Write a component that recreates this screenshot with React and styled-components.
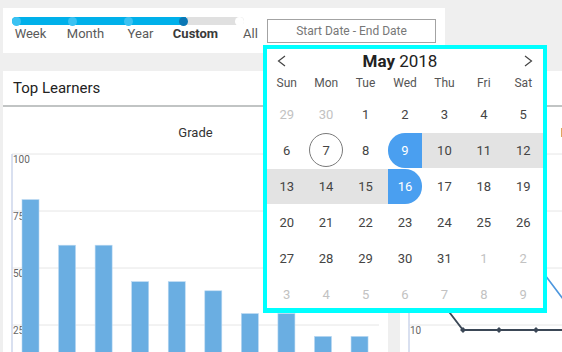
import styled, { createGlobalStyle, css } from "styled-components";

const GlobalStyle = createGlobalStyle`
  body {
    margin: 0;
    background: #efefef;
    overflow: hidden;
    font-family: Roboto, "Liberation Sans", sans-serif;
  }
`;

const Page = styled.div`
  width: 800px;
  padding: 8px 0 0 3px;
`;

const Toolbar = styled.div`
  display: flex;
  align-items: flex-start;
  width: 442px;
  height: 45px;
  box-sizing: border-box;
  padding-top: 9px;
  background: #fff;
`;

const SliderBlock = styled.div`
  width: 264px;
`;

const Track = styled.div`
  display: flex;
  align-items: center;
  justify-content: space-between;
  width: 232px;
  height: 8px;
  margin-left: 9px;
  border-radius: 4px;
  background: linear-gradient(to right, #00b0ea 174px, #e0e0e0 174px);
`;

const Dot = styled.span`
  width: 9px;
  height: 9px;
  border-radius: 50%;
  background: ${(p) =>
    p.kind === "active" ? "#0a76b4" : p.kind === "off" ? "#fff" : "#3bc2f2"};
`;

const Labels = styled.div`
  display: grid;
  grid-template-columns: repeat(5, 55px);
  margin-top: 2px;
`;

const Label = styled.span`
  text-align: center;
  font-size: 13px;
  line-height: 14px;
  color: #5a5a5a;

  ${(p) =>
    p.selected &&
    css`
      font-weight: 700;
      color: #3a3a3a;
    `}
`;

const DateField = styled.div`
  position: relative;
  margin-top: 2px;
`;

const DateInput = styled.div`
  width: 169px;
  height: 24px;
  box-sizing: border-box;
  border: 1px solid #a3a3a3;
  font-size: 12px;
  line-height: 22px;
  text-align: center;
  color: #777;
`;

const Popover = styled.div`
  position: absolute;
  top: 26px;
  left: -4px;
  z-index: 10;
  width: 284px;
  height: 268px;
  box-sizing: border-box;
  border: 4px solid #00ffff;
  border-bottom-width: 5px;
  background: #fff;
  overflow: hidden;
`;

const CalHeader = styled.div`
  display: flex;
  align-items: center;
  justify-content: space-between;
  height: 23px;
  padding: 0 10px;
`;

const CalTitle = styled.div`
  padding-right: 10px;
  font-size: 17px;
  color: #222;

  b {
    font-weight: 700;
  }
`;

const Week = styled.div`
  display: grid;
  grid-template-columns: repeat(7, 1fr);
  height: 22px;
  line-height: 22px;
  font-size: 12px;
  color: #555;
  text-align: center;
`;

const Days = styled.div`
  display: grid;
  grid-template-columns: repeat(7, 1fr);
  grid-auto-rows: 36px;
  margin-top: 3px;
`;

const bandBg = {
  in: "#e3e3e3",
  start: "linear-gradient(to right, transparent 50%, #e3e3e3 50%)",
  end: "linear-gradient(to right, #e3e3e3 50%, transparent 50%)",
};

const DayCell = styled.div`
  display: flex;
  justify-content: center;
  height: 35px;
  background: ${(p) => bandBg[p.range] || "transparent"};
`;

const DayMark = styled.span`
  display: flex;
  align-items: center;
  justify-content: center;
  width: 34px;
  height: 35px;
  box-sizing: border-box;
  font-size: 13px;
  color: ${(p) => (p.muted ? "#c2c2c2" : "#444")};

  ${(p) =>
    p.range === "start" &&
    css`
      background: #4a9ff0;
      color: #fff;
      border-radius: 17px 0 0 17px;
    `}
  ${(p) =>
    p.range === "end" &&
    css`
      background: #4a9ff0;
      color: #fff;
      border-radius: 0 17px 17px 0;
    `}
  ${(p) =>
    p.today &&
    css`
      height: 34px;
      border: 1px solid #7a7a7a;
      border-radius: 50%;
    `}
`;

const Dashboard = styled.div`
  display: grid;
  grid-template-columns: 385px 385px;
  gap: 12px;
  margin-top: 18px;
`;

const Panel = styled.div`
  height: 300px;
  background: #fff;
`;

const PanelHeader = styled.div`
  height: 34px;
  padding-left: 10px;
  border-bottom: 2px solid #c1c4c4;
  font-size: 15px;
  line-height: 34px;
  color: #222;
`;

const ChartTitle = styled.div`
  padding-top: 17px;
  font-size: 13px;
  line-height: 18px;
  text-align: center;
  color: #333;
`;

const ChartSvg = styled.svg`
  display: block;
`;

const weekdays = ["Sun", "Mon", "Tue", "Wed", "Thu", "Fri", "Sat"];

const days = [
  [29, true], [30, true], [1], [2], [3], [4], [5],
  [6], [7, false, null, true], [8], [9, false, "start"], [10, false, "in"], [11, false, "in"], [12, false, "in"],
  [13, false, "in"], [14, false, "in"], [15, false, "in"], [16, false, "end"], [17], [18], [19],
  [20], [21], [22], [23], [24], [25], [26],
  [27], [28], [29], [30], [31], [1, true], [2, true],
  [3, true], [4, true], [5, true], [6, true], [7, true], [8, true], [9, true],
];

const grades = [80, 60, 60, 44, 44, 40, 30, 30, 20, 20];
const yOf = (v) => 240 - v * 2.28;
const grid = [100, 75, 50, 25];

function Chevron({ dir }) {
  return (
    <svg width="9" height="12" viewBox="0 0 9 12">
      <path
        d={dir === "left" ? "M8 1 L1.5 6 L8 11" : "M1 1 L7.5 6 L1 11"}
        fill="none"
        stroke="#444"
        strokeWidth="1.2"
      />
    </svg>
  );
}

function Axis({ labels }) {
  return (
    <>
      {grid.map((g, i) => (
        <g key={g}>
          <line x1="9" x2="376" y1={yOf(g)} y2={yOf(g)} stroke="#e6e6e6" />
          <text x="10" y={yOf(g) + 8.5} fontSize="10" fill="#666" fontFamily="Roboto, sans-serif">
            {labels[i]}
          </text>
        </g>
      ))}
      <line x1="9" x2="9" y1="12" y2="240" stroke="#ccd6eb" strokeWidth="1.5" />
    </>
  );
}

function GradeChart() {
  return (
    <ChartSvg width="385" height="230">
      <Axis labels={["100", "75", "50", "25"]} />
      {grades.map((v, i) => (
        <rect
          key={i}
          x={19 + i * 36.56}
          y={yOf(v)}
          width="17"
          height={240 - yOf(v)}
          fill="#6aaee2"
          stroke="#b9d8f2"
          strokeWidth="0.6"
        />
      ))}
    </ChartSvg>
  );
}

const darkPts = [[27, 141], [63, 188], [99, 188], [136, 188], [172, 188]];
const bluePts = [[27, 60], [63, 40], [99, 80], [136, 121], [172, 169]];

function ScoreChart() {
  const pts = (a) => a.map((p) => p.join(",")).join(" ");
  return (
    <ChartSvg width="385" height="230">
      <Axis labels={["40", "30", "20", "10"]} />
      <polyline points={pts(bluePts)} fill="none" stroke="#4d97de" strokeWidth="1.6" />
      <polyline points={pts(darkPts)} fill="none" stroke="#3b4756" strokeWidth="1.8" />
      {darkPts.map(([x, y]) => (
        <path key={x} d={`M${x} ${y - 3} L${x + 3} ${y} L${x} ${y + 3} L${x - 3} ${y} Z`} fill="#3b4756" />
      ))}
    </ChartSvg>
  );
}

export default function App() {
  return (
    <Page>
      <GlobalStyle />
      <Toolbar>
        <SliderBlock>
          <Track>
            <Dot />
            <Dot />
            <Dot />
            <Dot kind="active" />
            <Dot kind="off" />
          </Track>
          <Labels>
            <Label>Week</Label>
            <Label>Month</Label>
            <Label>Year</Label>
            <Label selected>Custom</Label>
            <Label>All</Label>
          </Labels>
        </SliderBlock>
        <DateField>
          <DateInput>Start Date - End Date</DateInput>
          <Popover>
            <CalHeader>
              <Chevron dir="left" />
              <CalTitle>
                <b>May</b> 2018
              </CalTitle>
              <Chevron dir="right" />
            </CalHeader>
            <Week>
              {weekdays.map((d) => (
                <span key={d}>{d}</span>
              ))}
            </Week>
            <Days>
              {days.map(([n, muted, range, today], i) => (
                <DayCell key={i} range={range}>
                  <DayMark muted={muted} range={range} today={today}>
                    {n}
                  </DayMark>
                </DayCell>
              ))}
            </Days>
          </Popover>
        </DateField>
      </Toolbar>
      <Dashboard>
        <Panel>
          <PanelHeader>Top Learners</PanelHeader>
          <ChartTitle>Grade</ChartTitle>
          <GradeChart />
        </Panel>
        <Panel>
          <PanelHeader>Score Trend</PanelHeader>
          <ChartTitle>Final Score</ChartTitle>
          <ScoreChart />
        </Panel>
      </Dashboard>
    </Page>
  );
}
